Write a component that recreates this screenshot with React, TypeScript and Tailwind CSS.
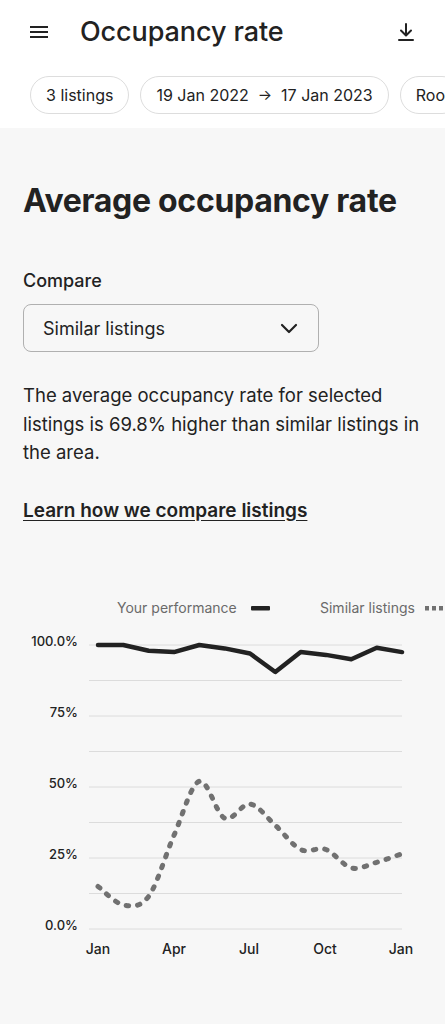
import React from 'react';

const FONT = 'font-["Inter","Noto_Sans",sans-serif]';

const X0 = 98;
const STEP = (402 - 98) / 12;
const yOf = (v: number) => 928 - (v / 100) * 284;

// monthly values read off the chart
const yours = [100, 100, 98, 97.5, 100, 98.8, 97, 90.5, 97.5, 96.5, 95, 99, 97.5];
const similar = [15, 8.5, 11.5, 33, 52, 39, 44, 36.5, 28, 28, 21.5, 23.5, 26.5];

const toPts = (vals: number[]) => vals.map((v, i) => [X0 + i * STEP, yOf(v)]);

const linePath = (pts: number[][]) =>
  pts.map((p, i) => `${i === 0 ? 'M' : 'L'}${p[0].toFixed(1)} ${p[1].toFixed(1)}`).join(' ');

const smoothPath = (pts: number[][]) => {
  let d = `M${pts[0][0].toFixed(1)} ${pts[0][1].toFixed(1)}`;
  for (let i = 0; i < pts.length - 1; i++) {
    const p0 = pts[i - 1] || pts[i];
    const p1 = pts[i];
    const p2 = pts[i + 1];
    const p3 = pts[i + 2] || p2;
    const c1x = p1[0] + (p2[0] - p0[0]) / 6;
    const c1y = p1[1] + (p2[1] - p0[1]) / 6;
    const c2x = p2[0] - (p3[0] - p1[0]) / 6;
    const c2y = p2[1] - (p3[1] - p1[1]) / 6;
    d += ` C${c1x.toFixed(1)} ${c1y.toFixed(1)} ${c2x.toFixed(1)} ${c2y.toFixed(1)} ${p2[0].toFixed(1)} ${p2[1].toFixed(1)}`;
  }
  return d;
};

const Chart: React.FC = () => {
  const top = 590;
  const grid = Array.from({ length: 9 }, (_, i) => 644 + i * 35.5);
  const yLabels: [string, number][] = [
    ['100.0%', 644],
    ['75%', 715],
    ['50%', 786],
    ['25%', 857],
    ['0.0%', 928],
  ];
  const xLabels: [string, number][] = [
    ['Jan', 98],
    ['Apr', 174],
    ['Jul', 249],
    ['Oct', 325],
    ['Jan', 401],
  ];
  return (
    <svg width="445" height="380" viewBox={`0 ${top} 445 380`} className="block">
      <text x="117" y="612" fontSize="14" fill="#6a6a6a" fontFamily="Inter, sans-serif">
        Your performance
      </text>
      <rect x="251" y="605" width="19" height="4.5" rx="1" fill="#222" />
      <text x="320" y="612" fontSize="14" fill="#6a6a6a" fontFamily="Inter, sans-serif">
        Similar listings
      </text>
      <rect x="425" y="605" width="4" height="4.5" fill="#717171" />
      <rect x="432" y="605" width="4" height="4.5" fill="#717171" />
      <rect x="439" y="605" width="4" height="4.5" fill="#717171" />

      {grid.map((y) => (
        <line key={y} x1="89" x2="402" y1={y} y2={y} stroke="#dcdcdc" strokeWidth="1" />
      ))}
      {yLabels.map(([t, y]) => (
        <text
          key={t}
          x="78"
          y={y + 1}
          textAnchor="end"
          fontSize="13"
          fontWeight="500"
          fill="#222"
          fontFamily="Inter, sans-serif"
        >
          {t}
        </text>
      ))}
      {xLabels.map(([t, x], i) => (
        <text
          key={i}
          x={x}
          y="953"
          textAnchor="middle"
          fontSize="14"
          fontWeight="500"
          fill="#222"
          fontFamily="Inter, sans-serif"
        >
          {t}
        </text>
      ))}

      <path
        d={smoothPath(toPts(similar))}
        fill="none"
        stroke="#717171"
        strokeWidth="5"
        strokeLinecap="round"
        strokeDasharray="2.5 9"
      />
      <path
        d={linePath(toPts(yours))}
        fill="none"
        stroke="#222"
        strokeWidth="4.5"
        strokeLinejoin="round"
        strokeLinecap="round"
      />
    </svg>
  );
};

const Chip: React.FC<{ children: React.ReactNode }> = ({ children }) => (
  <div className="shrink-0 h-[38px] px-[15px] rounded-full border border-[#dddddd] flex items-center text-[16px] text-[#222] whitespace-nowrap">
    {children}
  </div>
);

export default function App() {
  return (
    <div className={`w-[445px] h-[1024px] overflow-hidden bg-[#f7f7f7] text-[#222] ${FONT}`}>
      <div className="bg-white h-[128px]">
        <div className="h-[64px] flex items-center pl-[30px] pr-[31px]">
          <svg width="18" height="14" viewBox="0 0 18 14" className="mr-[32px]">
            <rect x="0" y="1" width="18" height="2" fill="#222" />
            <rect x="0" y="6" width="18" height="2" fill="#222" />
            <rect x="0" y="11" width="18" height="2" fill="#222" />
          </svg>
          <h1 className="text-[27px] font-medium tracking-[-0.1px] flex-1">Occupancy rate</h1>
          <svg width="16" height="18" viewBox="0 0 16 18">
            <path d="M8 1v11M3 7.5l5 5 5-5" fill="none" stroke="#222" strokeWidth="2" strokeLinecap="round" strokeLinejoin="round" />
            <path d="M1 17h14" stroke="#222" strokeWidth="2" strokeLinecap="round" />
          </svg>
        </div>
        <div className="flex gap-[11px] pl-[30px] mt-[12px] overflow-hidden">
          <Chip>3 listings</Chip>
          <Chip>
            <span>19 Jan 2022</span>
            <span className="mx-[9px] text-[15px]">→</span>
            <span>17 Jan 2023</span>
          </Chip>
          <Chip>Roo</Chip>
        </div>
      </div>

      <div className="px-[23px] pt-[53px]">
        <h2 className="text-[32px] font-bold leading-[40px] tracking-[-0.3px]">Average occupancy rate</h2>
        <div className="mt-[48px] text-[18px] font-medium leading-[24px]">Compare</div>
        <div className="mt-[11px] w-[296px] h-[48px] rounded-[8px] border border-[#b0b0b0] flex items-center justify-between pl-[19px] pr-[20px]">
          <span className="text-[18px]">Similar listings</span>
          <svg width="18" height="12" viewBox="0 0 18 12">
            <path d="M2 3l7 7 7-7" fill="none" stroke="#222" strokeWidth="2.2" strokeLinecap="round" strokeLinejoin="round" />
          </svg>
        </div>
        <p className="mt-[29px] text-[18.5px] leading-[28.5px] text-[#222]">
          The average occupancy rate for selected listings is 69.8% higher than similar listings in the area.
        </p>
        <a className="block mt-[30px] text-[19px] font-semibold underline underline-offset-[3px]">
          Learn how we compare listings
        </a>
      </div>

      <div className="mt-[66px]">
        <Chart />
      </div>
    </div>
  );
}
